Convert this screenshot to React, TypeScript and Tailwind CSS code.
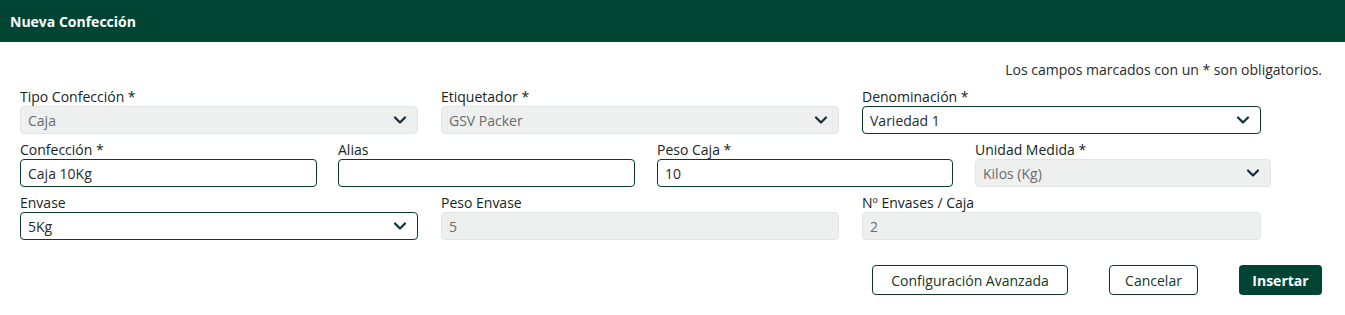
import React from "react";

const font = { fontFamily: '"Open Sans", "Noto Sans", sans-serif' };

function Chevron() {
  return (
    <svg width="14" height="10" viewBox="0 0 14 10" className="shrink-0">
      <polyline
        points="2,2.5 7,7.5 12,2.5"
        fill="none"
        stroke="#0f2e38"
        strokeWidth="2.2"
        strokeLinecap="round"
        strokeLinejoin="round"
      />
    </svg>
  );
}

interface FieldProps {
  label: string;
  value?: string;
  width: string;
  disabled?: boolean;
  select?: boolean;
}

function Field({ label, value = "", width, disabled, select }: FieldProps) {
  const box = disabled
    ? "bg-[#eef0ef] border-[#e2e5e3] text-[#6b6b6b]"
    : "bg-white border-[#0c3b2c] text-[#2a2a2a]";
  return (
    <div className={`flex flex-col ${width}`}>
      <label className="text-[14px] leading-[18px] text-[#14261f]">{label}</label>
      <div
        className={`h-[28px] border rounded-[4px] flex items-center justify-between pl-[7px] pr-[10px] text-[14px] ${box}`}
      >
        <span>{value}</span>
        {select && <Chevron />}
      </div>
    </div>
  );
}

export default function App() {
  return (
    <div className="w-[1345px] h-[315px] bg-white" style={font}>
      <div className="h-[42px] bg-[#004534] flex items-center px-[10px]">
        <h1 className="text-white font-bold text-[14px]">Nueva Confección</h1>
      </div>

      <div className="pl-[20px] pr-[23px]">
        <p className="text-right text-[14px] text-[#2a2a2a] mt-[19px] leading-[18px]">
          Los campos marcados con un * son obligatorios.
        </p>

        <div className="flex gap-[23px] mt-[9px]">
          <Field label="Tipo Confección *" value="Caja" width="w-[398px]" disabled select />
          <Field label="Etiquetador *" value="GSV Packer" width="w-[398px]" disabled select />
          <Field label="Denominación *" value="Variedad 1" width="w-[399px]" select />
        </div>

        <div className="flex mt-[7px]">
          <Field label="Confección *" value="Caja 10Kg" width="w-[297px]" />
          <div className="w-[21px]" />
          <Field label="Alias" width="w-[297px]" />
          <div className="w-[22px]" />
          <Field label="Peso Caja *" value="10" width="w-[296px]" />
          <div className="w-[22px]" />
          <Field label="Unidad Medida *" value="Kilos (Kg)" width="w-[296px]" disabled select />
        </div>

        <div className="flex gap-[23px] mt-[7px]">
          <Field label="Envase" value="5Kg" width="w-[398px]" select />
          <Field label="Peso Envase" value="5" width="w-[398px]" disabled />
          <Field label="Nº Envases / Caja" value="2" width="w-[399px]" disabled />
        </div>

        <div className="flex justify-end items-center mt-[25px]">
          <button className="h-[30px] w-[196px] border border-[#0c3b2c] rounded-[4px] text-[14px] text-[#15372b] bg-white">
            Configuración Avanzada
          </button>
          <button className="h-[30px] w-[89px] ml-[41px] border border-[#0c3b2c] rounded-[4px] text-[14px] text-[#15372b] bg-white">
            Cancelar
          </button>
          <button className="h-[30px] w-[83px] ml-[41px] rounded-[4px] text-[14px] font-bold text-white bg-[#004534]">
            Insertar
          </button>
        </div>
      </div>
    </div>
  );
}
